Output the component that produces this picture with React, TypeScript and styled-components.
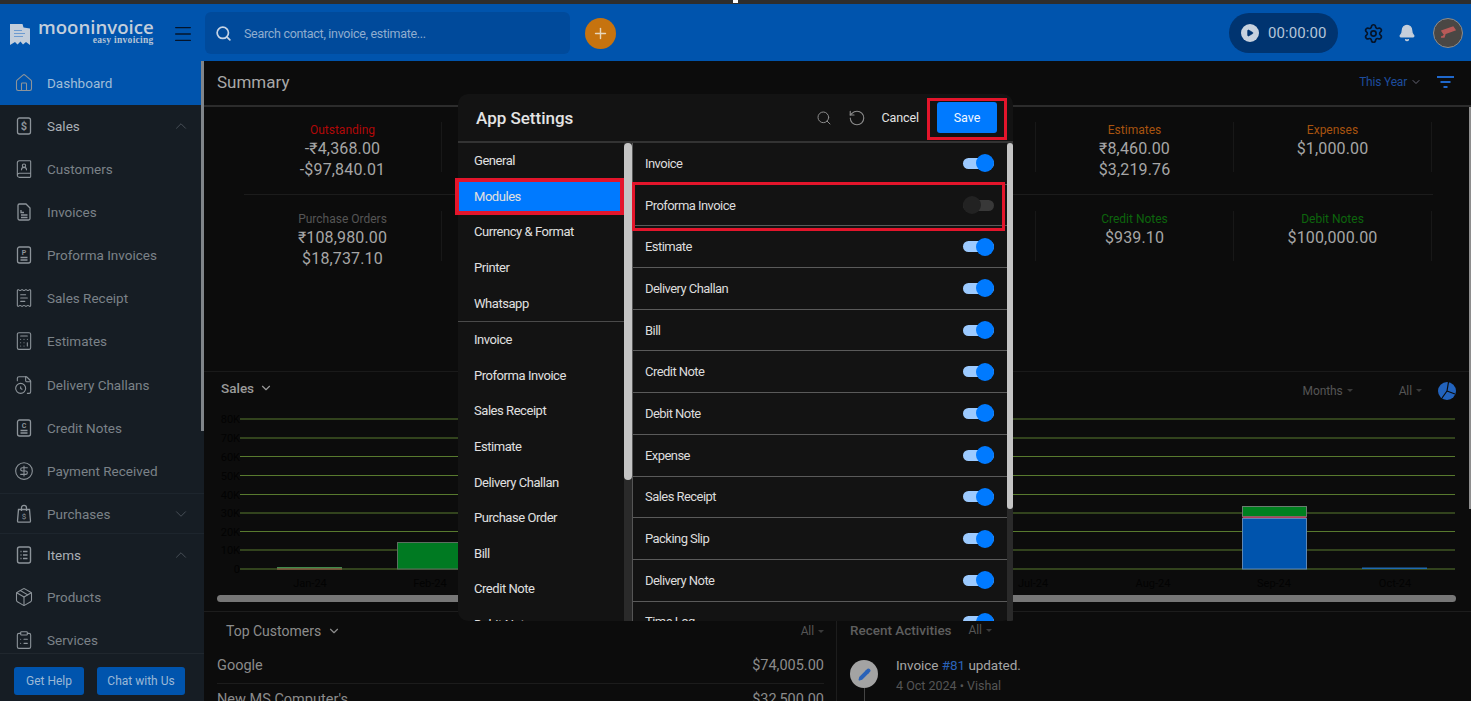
import React from 'react'
import styled, { createGlobalStyle } from 'styled-components'
import {
  House,
  BookUser,
  ReceiptText,
  Calculator,
  FileClock,
  CircleDollarSign,
  ClipboardList,
  Package,
  ChevronUp,
  ChevronDown,
  Search,
  Menu as MenuIcon,
  Plus,
  Play,
  Settings,
  Bell,
  RotateCcw,
  Pencil,
} from 'lucide-react'

const GlobalStyle = createGlobalStyle`
  html, body { margin: 0; padding: 0; background: #0c0c0c; }
  body { font-family: Roboto, "Noto Sans", sans-serif; }
  * { box-sizing: border-box; }
`

const DocIcon = ({ mark, lines = 2 }: { mark: string; lines?: number }) => (
  <svg width="20" height="20" viewBox="0 0 20 20" fill="none" stroke="currentColor" strokeWidth="1.3">
    <rect x="3.5" y="2" width="13" height="16" rx="2" />
    <text
      x="10"
      y={lines ? 10 : 14}
      fontSize={lines ? 7 : 11}
      fontWeight="700"
      textAnchor="middle"
      fill="currentColor"
      stroke="none"
      fontFamily="Roboto"
    >
      {mark}
    </text>
    {lines > 0 && <path d="M6.5 12.5h7M6.5 15h7" />}
  </svg>
)

const InvoiceIcon = () => (
  <svg width="20" height="20" viewBox="0 0 20 20" fill="none" stroke="currentColor" strokeWidth="1.3">
    <path d="M5.500 2H12l4 4v10.500a1.500 1.500 0 0 1-1.500 1.500h-9A1.500 1.500 0 0 1 4 16.500V3.500A1.500 1.500 0 0 1 5.500 2z" />
    <path d="M7 8v2.500h3M7 13h6.500M7 15.500h6.500" />
  </svg>
)

const ItemsIcon = () => (
  <svg width="20" height="20" viewBox="0 0 20 20" fill="none" stroke="currentColor" strokeWidth="1.4">
    <rect x="3.500" y="2" width="13" height="16" rx="2" />
    <path d="M6.500 6.500h1M9 6.500h4.500M6.500 10h1M9 10h4.500M6.500 13.500h1M9 13.500h4.500" />
  </svg>
)

const BagIcon = () => (
  <svg width="20" height="20" viewBox="0 0 20 20" fill="none" stroke="currentColor" strokeWidth="1.3">
    <path d="M4.500 5.500h11l1 11.500a1.200 1.200 0 0 1-1.200 1.200H4.700A1.200 1.200 0 0 1 3.500 17z" />
    <path d="M7.500 7V3.800a2.500 2.500 0 0 1 5 0V7" />
    <text x="10" y="15" fontSize="8" textAnchor="middle" fill="currentColor" stroke="none" fontFamily="Roboto">
      $
    </text>
  </svg>
)

const Logo = () => (
  <LogoSvg width="22" height="23" viewBox="0 0 22 23">
    <path d="M1 2h12.500l1 3.500 6.500 1V23l-4-3-3 2.500-2.500-3-3 3-2.500-2.500L1 23z" fill="#c3cedb" />
    <path d="M5 8.500h8M5 11.500h11M5 14.500h9" stroke="#6d9bd0" strokeWidth="1" />
  </LogoSvg>
)

const PieIcon = () => (
  <svg width="18" height="18" viewBox="0 0 18 18">
    <circle cx="9" cy="9" r="9" fill="#2263bd" />
    <path d="M9 9l1.500-9M9 9l8 3M9 9l-5 7" stroke="#0c0c0c" strokeWidth="1.200" />
  </svg>
)

const CameraAvatar = () => (
  <svg width="30" height="30" viewBox="0 0 30 30">
    <circle cx="15" cy="15" r="14.500" fill="#4a4744" stroke="#8d8d8d" />
    <path d="M9 13l11-4 2 3-11 4zM12 16l-1 3H8" fill="#b85a58" stroke="#b85a58" strokeWidth="1.400" />
  </svg>
)

const FilterIcon = () => (
  <svg width="17" height="12" viewBox="0 0 17 12" stroke="#1f68cc" strokeWidth="2">
    <path d="M0 1h17M3.500 6h10M6.500 11h4" />
  </svg>
)

const yLines = [419, 438, 456.5, 475.5, 494.5, 513, 531.5, 550, 569]
const yNames = ['80K', '70K', '60K', '50K', '40K', '30K', '20K', '10K', '0']
const months = [
  { name: 'Jan-24', x: 310 },
  { name: 'Feb-24', x: 430 },
  { name: 'Jul-24', x: 1033 },
  { name: 'Aug-24', x: 1153 },
  { name: 'Sep-24', x: 1274 },
  { name: 'Oct-24', x: 1395 },
]

const SalesChart = () => (
  <ChartSvg viewBox="217 410 1254 180" width="1254" height="180">
    {yLines.map((y, i) => (
      <g key={y}>
        <line x1="240" x2="1455" y1={y} y2={y} stroke="#587a2e" strokeWidth="1" />
        <text x="240" y={y + 4} textAnchor="end" fontSize="11" fill="#030303">
          {yNames[i]}
        </text>
      </g>
    ))}
    {months.map((m) => (
      <text key={m.name} x={m.x} y="587" textAnchor="middle" fontSize="11" fill="#030303">
        {m.name}
      </text>
    ))}
    <rect x="277" y="567" width="65" height="1.500" fill="#3f8a4a" />
    <rect x="277" y="568.500" width="65" height="1" fill="#a8604f" />
    <rect x="397.500" y="542.500" width="65" height="26.500" fill="#007a22" stroke="#5c6f60" />
    <rect x="1242.500" y="506.500" width="64" height="10" fill="#00801f" stroke="#6b7d70" />
    <rect x="1242.500" y="516.500" width="64" height="2" fill="#b0405c" />
    <rect x="1242.500" y="518.500" width="64" height="50.500" fill="#0054ad" stroke="#5f86b3" />
    <rect x="1362" y="567.500" width="65" height="1.500" fill="#1f6ab0" />
  </ChartSvg>
)

const navItems = [
  { name: 'Dashboard', icon: <House size={20} strokeWidth={1.3} />, kind: 'active' },
  { name: 'Sales', icon: <DocIcon mark="$" lines={0} />, kind: 'group', chevron: 'up' },
  { name: 'Customers', icon: <BookUser size={20} strokeWidth={1.3} /> },
  { name: 'Invoices', icon: <InvoiceIcon /> },
  { name: 'Proforma Invoices', icon: <DocIcon mark="P" /> },
  { name: 'Sales Receipt', icon: <ReceiptText size={20} strokeWidth={1.3} /> },
  { name: 'Estimates', icon: <Calculator size={20} strokeWidth={1.3} /> },
  { name: 'Delivery Challans', icon: <FileClock size={20} strokeWidth={1.3} /> },
  { name: 'Credit Notes', icon: <DocIcon mark="C" /> },
  { name: 'Payment Received', icon: <CircleDollarSign size={20} strokeWidth={1.3} /> },
  { name: 'Purchases', icon: <BagIcon />, chevron: 'down', ruled: true },
  { name: 'Items', icon: <ItemsIcon />, kind: 'open', chevron: 'up' },
  { name: 'Products', icon: <Package size={20} strokeWidth={1.3} /> },
  { name: 'Services', icon: <ClipboardList size={20} strokeWidth={1.3} /> },
]

const settingsNav = ['General', 'Modules', 'Currency & Format', 'Printer', 'Whatsapp']
const settingsDocs = [
  'Invoice',
  'Proforma Invoice',
  'Sales Receipt',
  'Estimate',
  'Delivery Challan',
  'Purchase Order',
  'Bill',
  'Credit Note',
  'Debit Note',
]
const modules = [
  'Invoice',
  'Proforma Invoice',
  'Estimate',
  'Delivery Challan',
  'Bill',
  'Credit Note',
  'Debit Note',
  'Expense',
  'Sales Receipt',
  'Packing Slip',
  'Delivery Note',
  'Time Log',
]

const summaryTop = [
  { label: 'Outstanding', tone: '#b00808', values: ['-₹4,368.00', '-$97,840.01'] },
  null,
  null,
  null,
  { label: 'Estimates', tone: '#a8530f', values: ['₹8,460.00', '$3,219.76'] },
  { label: 'Expenses', tone: '#a8530f', values: ['$1,000.00'] },
]
const summaryBottom = [
  { label: 'Purchase Orders', tone: '#555555', values: ['₹108,980.00', '$18,737.10'] },
  null,
  null,
  null,
  { label: 'Credit Notes', tone: '#0d650d', values: ['$939.10'] },
  { label: 'Debit Notes', tone: '#0d650d', values: ['$100,000.00'] },
]

type Stat = { label: string; tone: string; values: string[] } | null

const StatRow = ({ stats }: { stats: Stat[] }) => (
  <SummaryRow>
    {stats.map((s, i) => (
      <StatCell key={i}>
        {s && (
          <>
            <StatLabel $tone={s.tone}>{s.label}</StatLabel>
            {s.values.map((v) => (
              <StatValue key={v}>{v}</StatValue>
            ))}
          </>
        )}
      </StatCell>
    ))}
  </SummaryRow>
)

const App = () => (
  <Page>
    <GlobalStyle />
    <TopStrip>
      <StripMark />
    </TopStrip>
    <Header>
      <Brand>
        <Logo />
        <BrandText>
          <BrandName>mooninvoice</BrandName>
          <BrandTag>easy invoicing</BrandTag>
        </BrandText>
      </Brand>
      <Burger>
        <MenuIcon size={22} strokeWidth={1.4} />
      </Burger>
      <SearchBox>
        <Search size={17} strokeWidth={2.4} color="#c5d4e6" />
        <span>Search contact, invoice, estimate...</span>
      </SearchBox>
      <AddButton>
        <Plus size={17} strokeWidth={2} />
      </AddButton>
      <HeaderRight>
        <Timer>
          <PlayDot>
            <Play size={8} fill="#003470" color="#003470" />
          </PlayDot>
          00:00:00
        </Timer>
        <Settings size={21} strokeWidth={1.9} color="#04142a" />
        <Bell size={18} fill="#c5cfdb" color="#c5cfdb" />
        <AvatarSlot>
          <CameraAvatar />
        </AvatarSlot>
      </HeaderRight>
    </Header>
    <Body>
      <Sidebar>
        <NavList>
          {navItems.map((item) => (
            <NavRow key={item.name} $kind={item.kind} $ruled={item.ruled}>
              <NavIcon>{item.icon}</NavIcon>
              <span>{item.name}</span>
              {item.chevron === 'up' && <NavChevron><ChevronUp size={18} strokeWidth={1.2} /></NavChevron>}
              {item.chevron === 'down' && <NavChevron><ChevronDown size={18} strokeWidth={1.2} /></NavChevron>}
            </NavRow>
          ))}
        </NavList>
        <SideFooter>
          <HelpButton $w={70}>Get Help</HelpButton>
          <HelpButton $w={88}>Chat with Us</HelpButton>
        </SideFooter>
        <SideThumb />
      </Sidebar>
      <Main>
        <SummaryHead>
          <SummaryTitle>Summary</SummaryTitle>
          <PeriodPick>
            This Year
            <ChevronDown size={12} color="#667" />
          </PeriodPick>
          <FilterIcon />
        </SummaryHead>
        <SummaryGrid>
          <StatRow stats={summaryTop} />
          <StatRow stats={summaryBottom} />
        </SummaryGrid>
        <SalesPanel>
          <SalesHead>
            <SalesTitle>
              Sales
              <ChevronDown size={14} />
            </SalesTitle>
            <DimPick $gap={46}>Months<Caret /></DimPick>
            <DimPick $gap={16}>All<Caret /></DimPick>
            <PieIcon />
          </SalesHead>
          <SalesChart />
          <HScroll />
        </SalesPanel>
        <BottomRow>
          <CustomersPanel>
            <CustomersHead>
              <CustomersTitle>
                Top Customers
                <ChevronDown size={14} />
              </CustomersTitle>
              <DimPick $gap={0}>All<Caret /></DimPick>
            </CustomersHead>
            <CustomerRow>
              <span>Google</span>
              <span>$74,005.00</span>
            </CustomerRow>
            <CustomerRow>
              <span>New MS Computer's</span>
              <span>$32,500.00</span>
            </CustomerRow>
          </CustomersPanel>
          <ActivityPanel>
            <ActivityHead>
              <ActivityTitle>Recent Activities</ActivityTitle>
              <DimPick $gap={0}>All<Caret /></DimPick>
            </ActivityHead>
            <ActivityItem>
              <ActivityDot>
                <Pencil size={13} fill="#2a62b8" color="#2a62b8" />
              </ActivityDot>
              <div>
                <ActivityText>
                  Invoice <ActivityLink>#81</ActivityLink> updated.
                </ActivityText>
                <ActivityMeta>4 Oct 2024 • Vishal</ActivityMeta>
              </div>
            </ActivityItem>
          </ActivityPanel>
        </BottomRow>
        <MainThumb />
      </Main>
    </Body>

    <Modal>
      <ModalHead>
        <ModalTitle>App Settings</ModalTitle>
        <Search size={16} strokeWidth={1.5} color="#8c8c8c" />
        <RotateCcw size={18} strokeWidth={1.5} color="#8c8c8c" />
        <CancelText>Cancel</CancelText>
        <SaveFrame>
          <SaveButton>Save</SaveButton>
        </SaveFrame>
      </ModalHead>
      <ModalBody>
        <SettingsNav>
          <NavGroup>
            {settingsNav.map((n) => (
              <SettingsLink key={n} $active={n === 'Modules'}>
                {n}
              </SettingsLink>
            ))}
          </NavGroup>
          <NavGroup>
            {settingsDocs.map((n) => (
              <SettingsLink key={n}>{n}</SettingsLink>
            ))}
          </NavGroup>
        </SettingsNav>
        <ScrollTrack $w={8}>
          <ScrollThumb $h={337} />
        </ScrollTrack>
        <ModuleList>
          {modules.map((m) => (
            <ModuleRow key={m} $marked={m === 'Proforma Invoice'}>
              <span>{m}</span>
              <Toggle $on={m !== 'Proforma Invoice'}>
                <ToggleKnob $on={m !== 'Proforma Invoice'} />
              </Toggle>
            </ModuleRow>
          ))}
        </ModuleList>
        <ScrollTrack $w={6}>
          <ScrollThumb $h={366} />
        </ScrollTrack>
      </ModalBody>
    </Modal>
  </Page>
)

export default App

const Page = styled.div`
  position: relative;
  width: 1471px;
  height: 701px;
  overflow: hidden;
  display: flex;
  flex-direction: column;
  background: #0c0c0c;
`

const TopStrip = styled.div`
  height: 4px;
  background: #2e2e2e;
  display: flex;
  justify-content: center;
  flex: none;
`

const StripMark = styled.div`
  width: 5px;
  height: 3px;
  background: #fff;
  margin-left: -1px;
`

const Header = styled.header`
  height: 57px;
  flex: none;
  background: #0054ad;
  display: flex;
  align-items: center;
  padding: 0 0 0 9px;
`

const Brand = styled.div`
  display: flex;
  align-items: center;
  gap: 7px;
  width: 143px;
  flex: none;
  margin-top: 1px;
`

const LogoSvg = styled.svg`
  flex: none;
`

const BrandText = styled.div`
  display: flex;
  flex-direction: column;
  align-items: flex-end;
  margin-top: -4px;
`

const BrandName = styled.div`
  font-family: 'Open Sans', sans-serif;
  font-size: 18.6px;
  font-weight: 600;
  line-height: 19px;
  color: #c3cedb;
`

const BrandTag = styled.div`
  font-family: 'Liberation Serif', serif;
  font-size: 9.5px;
  font-weight: 700;
  line-height: 9px;
  letter-spacing: 0.3px;
  color: #b5c4d6;
`

const Burger = styled.div`
  width: 22px;
  margin-left: 20px;
  margin-top: 3px;
  display: flex;
  color: #04142a;
`

const SearchBox = styled.div`
  width: 365px;
  height: 42px;
  margin-left: 11px;
  margin-top: 1px;
  padding-left: 10px;
  background: #004a9b;
  border-radius: 6px;
  display: flex;
  align-items: center;
  gap: 12px;
  font-size: 12.5px;
  letter-spacing: -0.3px;
  color: #8fadcf;
`

const AddButton = styled.div`
  width: 31px;
  height: 31px;
  margin-left: 15px;
  margin-top: 2px;
  border-radius: 50%;
  background: #c6730f;
  color: #e7d6bd;
  display: flex;
  align-items: center;
  justify-content: center;
`

const HeaderRight = styled.div`
  margin-left: auto;
  margin-top: 1px;
  padding-right: 8px;
  display: flex;
  align-items: center;
  gap: 14px;
`

const AvatarSlot = styled.div`
  display: flex;
  margin-left: 3px;
`

const Timer = styled.div`
  width: 109px;
  height: 40px;
  margin-right: 11px;
  padding-left: 12px;
  border-radius: 20px;
  background: #003470;
  color: #b5c5d8;
  font-size: 15px;
  letter-spacing: 0.1px;
  display: flex;
  align-items: center;
  gap: 9px;
`

const PlayDot = styled.span`
  width: 18px;
  height: 18px;
  border-radius: 50%;
  background: #c8d2de;
  display: flex;
  align-items: center;
  justify-content: center;
`

const Body = styled.div`
  flex: 1;
  min-height: 0;
  display: flex;
`

const Sidebar = styled.aside`
  position: relative;
  width: 204px;
  flex: none;
  background: #161d24;
  display: flex;
  flex-direction: column;
`

const NavList = styled.nav`
  height: 592px;
  overflow: hidden;
`

const NavRow = styled.div<{ $kind?: string; $ruled?: boolean }>`
  height: ${(p) => (p.$kind === 'active' ? 44 : p.$ruled ? 41 : p.$kind ? 42 : 43.2)}px;
  display: flex;
  align-items: center;
  padding: ${(p) => (p.$ruled ? '1px' : '0')} 14px 0;
  font-size: 13.5px;
  background: ${(p) => (p.$kind === 'active' ? '#0054ad' : 'transparent')};
  color: ${(p) =>
    p.$kind === 'active' ? '#9fbdd8' : p.$kind ? '#a9afb5' : '#7b8288'};
  border-top: ${(p) => (p.$ruled ? '1px solid #1d252d' : 'none')};
  border-bottom: ${(p) => (p.$ruled ? '1px solid #1d252d' : 'none')};
`

const NavIcon = styled.span`
  width: 33px;
  flex: none;
  display: flex;
  color: #8d949a;
`

const NavChevron = styled.span`
  margin-left: auto;
  display: flex;
  color: #4c545b;
`

const SideFooter = styled.div`
  flex: 1;
  border-top: 1px solid #20272e;
  padding: 13px 0 0 14px;
  display: flex;
  gap: 13px;
  background: #161d24;
`

const HelpButton = styled.div<{ $w: number }>`
  width: ${(p) => p.$w}px;
  height: 28px;
  border-radius: 3px;
  background: #0054ad;
  color: #9bb8d6;
  font-size: 12px;
  display: flex;
  align-items: center;
  justify-content: center;
  white-space: nowrap;
`

const SideThumb = styled.div`
  position: absolute;
  right: 0;
  top: 0;
  width: 3px;
  height: 370px;
  background: #80858a;
`

const Main = styled.main`
  position: relative;
  flex: 1;
  min-width: 0;
  display: flex;
  flex-direction: column;
`

const SummaryHead = styled.div`
  height: 46px;
  flex: none;
  border-bottom: 2px solid #2c2c2c;
  padding: 0 17px 2px 13px;
  display: flex;
  align-items: center;
`

const SummaryTitle = styled.h1`
  margin: 0 auto 0 0;
  font-size: 17px;
  font-weight: 400;
  color: #a8a8a8;
`

const PeriodPick = styled.div`
  display: flex;
  align-items: center;
  gap: 3px;
  margin-right: 15px;
  font-size: 12px;
  letter-spacing: -0.2px;
  color: #1d4c9e;
`

const SummaryGrid = styled.section`
  height: 265px;
  flex: none;
  padding: 15px 0 0 40px;
  border-bottom: 1px solid #1a1a1a;
`

const SummaryRow = styled.div`
  display: grid;
  grid-template-columns: repeat(6, 198px);
  height: 67px;
  margin-bottom: 22px;
  position: relative;

  &:first-child::after {
    content: '';
    position: absolute;
    left: 0;
    width: 1189px;
    bottom: -6px;
    border-bottom: 1px solid #1c1c1c;
  }
`

const StatCell = styled.div`
  border-right: 1px solid #181818;
  height: 50px;
  text-align: center;
  white-space: nowrap;
`

const StatLabel = styled.div<{ $tone: string }>`
  font-size: 12px;
  line-height: 17px;
  color: ${(p) => p.$tone};
`

const StatValue = styled.div`
  font-size: 16px;
  line-height: 20.5px;
  letter-spacing: 0.15px;
  color: #a6a6a6;
`

const SalesPanel = styled.section`
  height: 240px;
  flex: none;
  border-bottom: 1px solid #1d1d1d;
  padding: 0 0 0 13px;
`

const SalesHead = styled.div`
  height: 37px;
  padding: 0 15px 0 4px;
  display: flex;
  align-items: center;
`

const SalesTitle = styled.div`
  margin-right: auto;
  margin-top: -6px;
  display: flex;
  align-items: center;
  gap: 5px;
  font-size: 13.5px;
  font-weight: 500;
  color: #9a9a9a;
`

const DimPick = styled.div<{ $gap: number }>`
  display: flex;
  align-items: center;
  gap: 4px;
  margin-right: ${(p) => p.$gap}px;
  font-size: 12px;
  letter-spacing: -0.1px;
  color: #555;
`

const Caret = styled.span`
  width: 0;
  height: 0;
  border-left: 3.5px solid transparent;
  border-right: 3.5px solid transparent;
  border-top: 3.5px solid #3a3a3a;
`

const ChartSvg = styled.svg`
  display: block;
  margin-top: 1px;
  font-family: Roboto, sans-serif;
`

const HScroll = styled.div`
  width: 1239px;
  height: 7px;
  margin-top: 5px;
  border-radius: 4px;
  background: #777;
`

const BottomRow = styled.div`
  flex: 1;
  min-height: 0;
  display: flex;
  overflow: hidden;
`

const CustomersPanel = styled.section`
  width: 633px;
  flex: none;
  border-right: 1px solid #1d1d1d;
  padding: 0 12px 0 13px;
`

const CustomersHead = styled.div`
  height: 38px;
  padding: 0 0 0 9px;
  display: flex;
  align-items: center;
  justify-content: space-between;
`

const CustomersTitle = styled.div`
  display: flex;
  align-items: center;
  gap: 6px;
  font-size: 14px;
  color: #8c8c8c;
`

const CustomerRow = styled.div`
  height: 34px;
  padding-bottom: 3px;
  display: flex;
  align-items: center;
  justify-content: space-between;
  border-bottom: 1px solid #1c1c1c;
  font-size: 14.5px;
  color: #8b8b8b;
`

const ActivityPanel = styled.section`
  flex: 1;
  padding: 0 13px;
`

const ActivityHead = styled.div`
  height: 36px;
  display: flex;
  align-items: center;
  gap: 17px;
`

const ActivityTitle = styled.div`
  font-size: 13.5px;
  font-weight: 500;
  color: #5e5e5e;
`

const ActivityItem = styled.div`
  display: flex;
  gap: 18px;
  margin-top: 8px;
`

const ActivityDot = styled.div`
  position: relative;
  top: 4px;
  width: 28px;
  height: 28px;
  flex: none;
  border-radius: 50%;
  background: #a3a3a3;
  display: flex;
  align-items: center;
  justify-content: center;

  &::after {
    content: '';
    position: absolute;
    top: 28px;
    left: 13.5px;
    width: 1px;
    height: 20px;
    background: #444;
  }
`

const ActivityText = styled.div`
  font-size: 13.5px;
  line-height: 18px;
  letter-spacing: -0.05px;
  color: #a6a6a6;
`

const ActivityLink = styled.span`
  color: #2a62b8;
`

const ActivityMeta = styled.div`
  margin-top: 4px;
  font-size: 12.5px;
  color: #555;
`

const MainThumb = styled.div`
  position: absolute;
  right: 0;
  top: 46px;
  width: 2px;
  height: 402px;
  background: #8e8e8e;
`

const Modal = styled.div`
  position: absolute;
  left: 458px;
  top: 94px;
  width: 555px;
  height: 527px;
  border-radius: 10px;
  background: #131313;
  display: flex;
  flex-direction: column;
`

const ModalHead = styled.div`
  height: 49px;
  flex: none;
  border-bottom: 2px solid #333;
  padding: 0 6px 0 18px;
  display: flex;
  align-items: center;
  gap: 16px;
`

const ModalTitle = styled.h2`
  margin: 0 auto 0 0;
  font-size: 17px;
  font-weight: 500;
  color: #e4e4e4;
`

const CancelText = styled.span`
  font-size: 12.5px;
  letter-spacing: -0.1px;
  color: #e4e4e4;
`

const SaveFrame = styled.div`
  margin-left: -8px;
  margin-top: 2px;
  padding: 1px 7px 4px;
  border: 3px solid #e3152b;
`

const SaveButton = styled.div`
  width: 60px;
  height: 31px;
  border-radius: 3px;
  background: #007aff;
  color: #f2f7ff;
  font-size: 12.5px;
  display: flex;
  align-items: center;
  justify-content: center;
`

const ModalBody = styled.div`
  flex: 1;
  min-height: 0;
  display: flex;
  clip-path: inset(0 -8px 0 -8px round 0 0 10px 10px);
`

const SettingsNav = styled.div`
  width: 166px;
  flex: none;
`

const NavGroup = styled.div`
  &:first-child {
    border-bottom: 1px solid #4a4a4a;
  }
`

const SettingsLink = styled.div<{ $active?: boolean }>`
  position: relative;
  height: 35.6px;
  padding-left: 16px;
  display: flex;
  align-items: center;
  font-size: 13px;
  letter-spacing: -0.45px;
  color: #e0e0e0;
  background: ${(p) => (p.$active ? '#007aff' : 'transparent')};

  ${(p) =>
    p.$active &&
    `&::after {
      content: '';
      position: absolute;
      inset: -1px 0 -1px -3px;
      border: 4px solid #e3152b;
    }`}
`

const ScrollTrack = styled.div<{ $w: number }>`
  width: ${(p) => p.$w}px;
  flex: none;
  background: #2a2a2a;
`

const ScrollThumb = styled.div<{ $h: number }>`
  height: ${(p) => p.$h}px;
  border-radius: 4px;
  background: #c4c4c4;
`

const ModuleList = styled.div`
  width: 375px;
  flex: none;
  border-left: 1px solid #555;
`

const ModuleRow = styled.div<{ $marked?: boolean }>`
  position: relative;
  height: 41.7px;
  padding: 0 13px 0 12px;
  display: flex;
  align-items: center;
  justify-content: space-between;
  border-bottom: 1px solid #5a5a5a;
  font-size: 13px;
  letter-spacing: -0.55px;
  color: #dcdcdc;

  ${(p) =>
    p.$marked &&
    `&::after {
      content: '';
      position: absolute;
      inset: -3px 2px -6px -1px;
      border: 3px solid #e3152b;
    }`}
`

const Toggle = styled.div<{ $on: boolean }>`
  position: relative;
  width: 31px;
  height: 11px;
  border-radius: 6px;
  background: ${(p) => (p.$on ? '#9ccaff' : '#383838')};
`

const ToggleKnob = styled.div<{ $on: boolean }>`
  position: absolute;
  top: -3.5px;
  left: ${(p) => (p.$on ? '13px' : '0')};
  width: 18px;
  height: 18px;
  border-radius: 50%;
  background: ${(p) => (p.$on ? '#007aff' : '#222')};
`
